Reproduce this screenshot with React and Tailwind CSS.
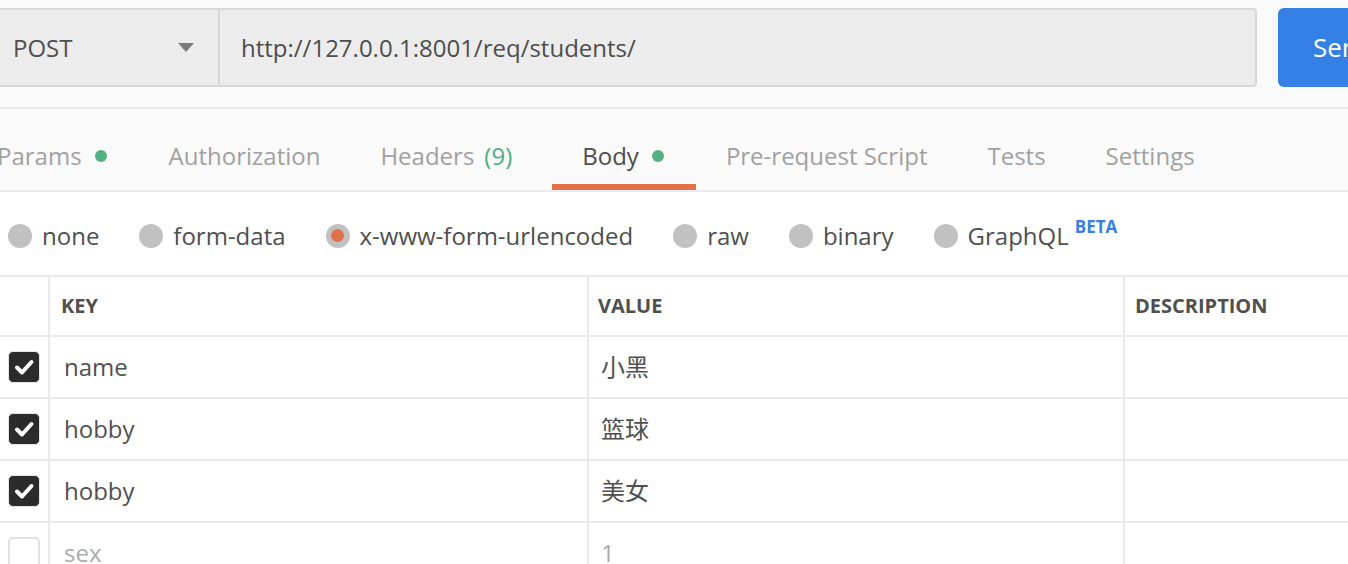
import React from "react";

const tabs = [
  { label: "Params", dot: true },
  { label: "Authorization" },
  { label: "Headers", count: "(9)" },
  { label: "Body", dot: true, active: true },
  { label: "Pre-request Script" },
  { label: "Tests" },
  { label: "Settings" },
];

const bodyTypes = [
  { label: "none" },
  { label: "form-data" },
  { label: "x-www-form-urlencoded", selected: true },
  { label: "raw" },
  { label: "binary" },
  { label: "GraphQL", beta: true },
];

const rows = [
  { key: "name", value: "小黑", checked: true },
  { key: "hobby", value: "篮球", checked: true },
  { key: "hobby", value: "美女", checked: true },
  { key: "sex", value: "1", checked: false },
];

function Checkbox({ checked }) {
  if (!checked) {
    return <div className="w-[32px] h-[32px] rounded-[5px] border-2 border-[#e2e2e2] bg-white" />;
  }
  return (
    <div className="w-[32px] h-[32px] rounded-[5px] bg-[#2b2b2b] border border-[#e6e6e6] flex items-center justify-center">
      <svg width="22" height="22" viewBox="0 0 22 22" fill="none">
        <path
          d="M4 11.5 L9 16.5 L18.5 6"
          stroke="white"
          strokeWidth="4"
          strokeLinecap="round"
          strokeLinejoin="round"
        />
      </svg>
    </div>
  );
}

export default function App() {
  return (
    <div className="w-[1348px] h-[564px] overflow-hidden bg-white font-['Open_Sans','Noto_Sans_CJK_SC',sans-serif] text-[#505050]">
      {/* request bar */}
      <div className="bg-[#fafafa] pt-[8px] h-[107px]">
        <div className="flex h-[79px]">
          <div className="w-[1257px] shrink-0 flex bg-[#ececec] border-y-2 border-r-2 border-[#d7d7d7] rounded-r-[4px]">
            <div className="w-[220px] shrink-0 flex items-center justify-between pl-[13px] pr-[24px] border-r-2 border-[#d7d7d7]">
              <span className="text-[24px] leading-[32px]">POST</span>
              <svg width="16" height="9" viewBox="0 0 16 9">
                <path d="M0 0 L16 0 L8 9 Z" fill="#7b7b7b" />
              </svg>
            </div>
            <div className="flex items-center pl-[21px]">
              <span className="text-[24px] leading-[32px] text-[#4d4d4d]">http://127.0.0.1:8001/req/students/</span>
            </div>
          </div>
          <button className="ml-[21px] w-[130px] shrink-0 bg-[#3480e4] rounded-[6px] text-white text-[26px] text-left pl-[35px]">
            Send
          </button>
        </div>
      </div>

      {/* tabs */}
      <div className="bg-[#fafafa] border-y-2 border-[#ebebeb] h-[85px]">
        <div className="flex h-full ml-[-33px]">
          {tabs.map((t) => (
            <div
              key={t.label}
              className={
                "flex items-end px-[30px] pb-[12px] border-b-[6px] " +
                (t.active ? "border-[#e2714a]" : "border-transparent")
              }
            >
              <span className={"text-[24px] leading-[33px] whitespace-nowrap " + (t.active ? "text-[#4e4e4e]" : "text-[#a1a1a1]")}>
                {t.label}
              </span>
              {t.count && <span className="ml-[10px] mr-[10px] text-[24px] leading-[33px] text-[#4fae80]">{t.count}</span>}
              {t.dot && <span className="ml-[13px] mr-[2px] mb-[10px] w-[12px] h-[12px] rounded-full bg-[#53b283]" />}
            </div>
          ))}
        </div>
      </div>

      {/* body type radios */}
      <div className="h-[83px] flex items-center pl-[8px] pt-[4px]">
        {bodyTypes.map((b) => (
          <div key={b.label} className="flex items-center mr-[40px]">
            <span className="w-[24px] h-[24px] rounded-full bg-[#c1c1c1] flex items-center justify-center">
              {b.selected && <span className="w-[13px] h-[13px] rounded-full bg-[#e2714a]" />}
            </span>
            <span className="ml-[10px] text-[24px] leading-[32px] text-[#4f4f4f] whitespace-nowrap">{b.label}</span>
            {b.beta && (
              <span className="ml-[6px] self-start -mt-[3px] text-[17px] font-bold leading-[20px] text-[#3780e0]">BETA</span>
            )}
          </div>
        ))}
      </div>

      {/* key/value table */}
      <div className="border-t-2 border-[#e9e9e9]">
        <div className="flex h-[60px] border-b-2 border-[#e9e9e9] text-[20px] font-bold text-[#4f4f4f]">
          <div className="w-[50px] shrink-0 border-r-2 border-[#e9e9e9]" />
          <div className="w-[539px] shrink-0 border-r-2 border-[#e9e9e9] flex items-center pl-[11px]">KEY</div>
          <div className="w-[536px] shrink-0 border-r-2 border-[#e9e9e9] flex items-center pl-[9px]">VALUE</div>
          <div className="flex-1 flex items-center pl-[10px]">DESCRIPTION</div>
        </div>
        {rows.map((r, i) => (
          <div key={i} className="flex h-[62px] border-b-2 border-[#e9e9e9] text-[24px]">
            <div className="w-[50px] shrink-0 border-r-2 border-[#e9e9e9] flex items-center pl-[8px]">
              <Checkbox checked={r.checked} />
            </div>
            <div className={"w-[539px] shrink-0 border-r-2 border-[#e9e9e9] flex items-center pl-[14px] " + (r.checked ? "text-[#505050]" : "text-[#ababab]")}>
              {r.key}
            </div>
            <div className={"w-[536px] shrink-0 border-r-2 border-[#e9e9e9] flex items-center pl-[12px] " + (r.checked ? "text-[#505050]" : "text-[#ababab]")}>
              {r.value}
            </div>
            <div className="flex-1" />
          </div>
        ))}
      </div>
    </div>
  );
}
